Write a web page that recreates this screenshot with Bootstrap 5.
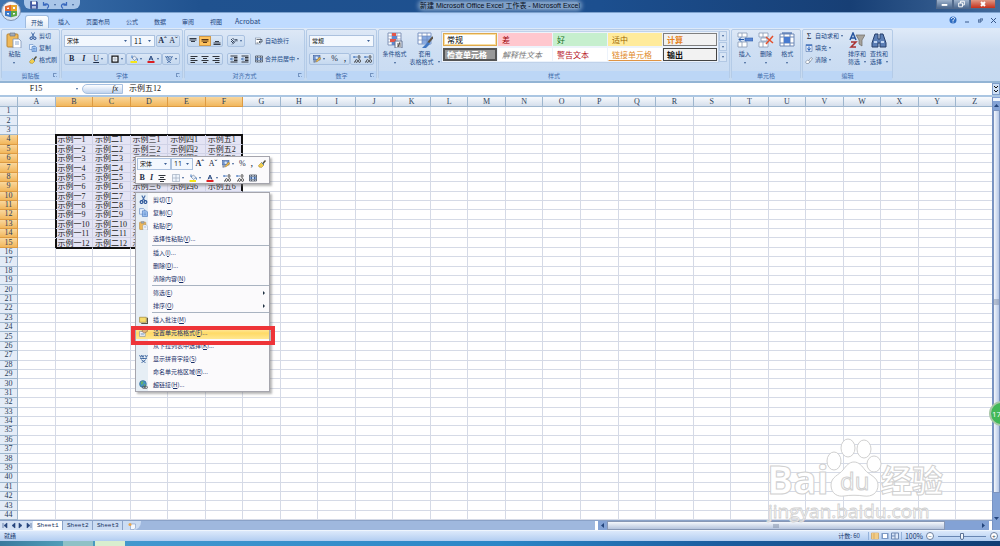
<!DOCTYPE html>
<html lang="zh-CN">
<head>
<meta charset="utf-8">
<meta name="viewport" content="width=device-width, initial-scale=1">
<title>新建 Microsoft Office Excel 工作表 - Microsoft Excel</title>
<link href="https://cdn.jsdelivr.net/npm/bootstrap@5.3.0/dist/css/bootstrap.min.css" rel="stylesheet">
<style>
:root{--ink:#234a86;--edge:#a5bfe0}
body{font:6px/8px "Open Sans","Noto Sans CJK SC",sans-serif;color:var(--ink);background:#bfdbff}
button,select,input{font:inherit;color:inherit;line-height:inherit}
button{border:0;background:none;padding:0;white-space:nowrap}
button:hover{background-color:#ffe9a8}
svg{flex:none;display:block}
.ic{width:8px;height:8px}.ic-big{width:16px;height:16px}
.caret{width:0;height:0;border:1px solid transparent;border-top:2px solid #3b5f95;border-bottom:0;flex:none}
.cn{font-family:"Noto Sans CJK SC",sans-serif}
.glyph{font:8px/10px "Liberation Serif",serif;color:#1c2b45}
.titlebar{height:13px;background:linear-gradient(90deg,#3f74b0 0,#20528f 20%,#1c4f8f 60%,#173f75 85%,#41699a 100%);border-bottom:1px solid #7ea3cf}
.titlebar .cap{font:7px/12px "Liberation Sans","Noto Sans CJK SC",sans-serif;color:#060d1a}
.titlebar .cap span{background:#7f9fc6;box-shadow:0 0 4px 2px #7f9fc6;border-radius:4px}
.qat{height:9px;margin-left:24px;padding:0 6px;border-radius:0 0 6px 6px;background:#a9c6e8}
.winbtn{width:17px;height:9px;border:1px solid #50688a;border-top:0;background:linear-gradient(#9fb3cc,#4d698f)}
.winbtn.close-win{width:26px;background:linear-gradient(#e09a86,#c5301b)}
.orb{position:absolute;left:1px;top:1px;width:20px;height:20px;z-index:3}
.tabs{height:15px;padding-left:25px;background:#bfdbff;color:#24457c}
.tabs a{color:inherit;text-decoration:none;line-height:13px;height:13px;padding:0 7px;margin-right:2px}
.tabs a.on{background:linear-gradient(#fff,#e2ecf8);border:1px solid #9ebbe0;border-bottom:0;border-radius:3px 3px 0 0;padding:0 5px}
.tabs a.wide{padding:0 4px;font-size:7px}
.ribbon{height:55px;padding:1px 1px 2px;background:linear-gradient(#dfeaf8,#cbdcf1 40%,#c6daf1);border-bottom:2px solid #93b4d4;gap:1px}
.group{border:1px solid #b4cbe7;border-radius:2px;background:linear-gradient(#dde8f6,#cfdff3 35%,#c8dbf2);flex:none}
.group .body{height:41px;padding:0 2px 1px}
.group .foot{height:9px;line-height:9px;background:#bcd6f6;color:#3e6aaa;text-align:center;position:relative}
.foot.launch::after{content:"";position:absolute;right:2px;top:2px;width:4px;height:4px;border:1px solid #7393c0;border-right-color:transparent;border-bottom-style:dotted}
.w-clip{width:59px}.w-font{width:122px}.w-align{width:121px}.w-num{width:71px}.w-style{width:352px}.w-cell{width:70px}.w-edit{width:91px}
.big{display:flex;flex-direction:column;align-items:center;width:22px;padding-top:2px}
.big .ic-big{margin-bottom:2px}
.line-btn{display:flex;align-items:center;gap:2px;height:12px}
.set{display:flex;align-items:center;justify-content:space-around;height:12px;border:1px solid #a9c1e0;border-radius:2px;background:linear-gradient(#dbe7f6,#c5d8ef)}
.set button{display:flex;align-items:center;justify-content:center;gap:2px;flex:auto;height:10px}
.set button.on{background:#ffc35e;border:1px solid #cf9a4c}
.w18{width:18px}.w24{width:24px}.w36{width:36px}.w44{width:44px}
select.pick{appearance:none;height:12px;border:1px solid #abc1de;border-radius:0;padding:0 2px;color:#101010;background:#f3f8fe url("data:image/svg+xml,%3Csvg xmlns='http://www.w3.org/2000/svg' width='3' height='2'%3E%3Cpath d='M0 0h3L1.5 2z' fill='%233b5f95'/%3E%3C/svg%3E") no-repeat right 3px center}
select.num{font-size:7px}
.gallery{display:grid;grid-template-columns:repeat(5,54px);grid-template-rows:13px 13px;gap:2px 1px;padding:1px;margin-top:1px;border:1px solid #c0d2ea;background:#edf3fb}
.gallery button{font:8px/10px "Noto Sans CJK SC",sans-serif;text-align:left;padding:0 3px;border:1px solid transparent;overflow:hidden}
.s-norm{background:#fff;color:#000;border-color:#e0a94b!important;box-shadow:inset 0 0 0 1px #f8dfa5}
.s-bad{background:#ffc7ce;color:#9c0006}.s-good{background:#c6efce;color:#167022}.s-mid{background:#ffeb9c;color:#9c6500}
.s-calc{background:#f2f2f2;color:#e5821e;border-color:#7f7f7f!important;font-weight:bold!important}
.s-check{background:#999;color:#fff;border:2px double #555!important;padding:0 2px!important;font-weight:bold!important;line-height:8px!important}
.s-exp{background:#fff;color:#777;font-style:italic!important}.s-warn{background:#fff;color:#b5101c}
.s-link{background:#fff;color:#df8a2c;border-bottom:1px solid #df9443!important}
.s-out{background:#f2f2f2;color:#111;border-color:#444!important;font-weight:bold!important}
.more{width:8px;height:31px;margin-top:1px;gap:1px}.more button{flex:1;background:#d8e5f5;border:1px solid #b2c8e4;display:flex;align-items:center;justify-content:center}
.fbar{height:14px;background:#fff;border-bottom:2px solid #abc6e2;color:#111;font:8px/12px "Liberation Serif","Noto Sans CJK SC",serif}
.fbar input{border:0;padding:0;outline:0;background:none;height:12px}
.fbar .entry{margin-left:6px}
.namebox{width:72px;text-align:center}
.fxpill{width:41px;height:10px;border:1px solid #a5bfe0;border-radius:5px 0 0 5px;background:linear-gradient(#fff,#bfd3ee)}
.expand{width:8px;background:#cfe0f5;border:1px solid #7d9cc8}
.pane{min-height:0;min-width:0;overflow:hidden;background:#fff}
.cells{table-layout:fixed;border-collapse:separate;border-spacing:0;width:calc(100% + 2px);height:calc(100% + 10px);font:8px/8px "Liberation Serif","Noto Sans CJK SC",serif;color:#222}
.cells th,.cells td{padding:0;border-right:1px solid #d5dae6;border-bottom:1px solid #d5dae6;font-weight:normal;line-height:8px;white-space:nowrap}
.cells td{padding:1px 0 0 2px;line-height:7px}
.cells th{text-align:center;background:#e4ecf7;border-color:#9eb6ce;color:#2c3e58}
.cells thead th{height:10px;background:linear-gradient(#f8fafd,#d5dfec)}
.cells th.hot{background:linear-gradient(#f9d79d,#f2b75c);border-color:#dd9b42}
.cells col.rowno{width:18px}
.cells td.sel{background:#e4e4f4;border-color:#d0d2e6}
.cells td.et{box-shadow:0 -1px #111,inset 0 1px #111}.cells td.el{box-shadow:inset 1px 0 #111,-1px 0 #111}.cells td.er{border-right-color:#111;box-shadow:inset -1px 0 #111}.cells td.eb{border-bottom-color:#111;box-shadow:0 1px #111}
.cells td.et.el{box-shadow:-1px -1px #111,inset 1px 1px #111}.cells td.et.er{box-shadow:0 -1px #111,inset -1px 1px #111}.cells td.eb.el{box-shadow:-1px 1px #111,inset 1px 0 #111}
.sheetbar{height:10px;background:#9fb8de;border-top:1px solid #8aa2c8;font:6px/9px "Liberation Mono",monospace}
.sheetbar .nav-arrows{width:33px;background:#d3e1f4}
.sheetbar a{color:#142f60;text-decoration:none;width:30px;padding-left:4px;background:#cbdcf3;border-right:1px solid #8aa2c8}
.sheetbar a.on{background:#fff}
.newtab{width:18px;background:#cbdcf3;border-radius:0 0 8px 0}
.hscroll{width:40%;background:#83a2d5}
.hthumb{flex:1;margin-right:5px;background:linear-gradient(#f4f7fc,#b5c4dd);border:1px solid #8797b5}
.hrest{width:42px}
.vscroll{width:8px;background:#83a2d5;border-left:1px solid #7793c4}
.vthumb{flex:1;margin-bottom:22px;background:linear-gradient(90deg,#f4f7fc,#b5c7e6);border:1px solid #7d94bf}
.status{height:11px;line-height:10px;padding:0 2px 0 4px;background:linear-gradient(#dce9fb,#b2cdf1);border-top:1px solid #eef5fd;color:#15356c}
.status .views{border-left:1px solid #94b2da;border-right:1px solid #94b2da;padding:0 2px;gap:2px}
.status input{appearance:none;width:48px;height:1px;background:#6886b3;margin:0 4px}
.status input::-webkit-slider-thumb{appearance:none;width:4px;height:7px;border:1px solid #5c7397;border-radius:0 0 2px 2px;background:#f2f6fc}
.pct{font-size:7px;margin:0 3px}
.knob{width:8px;height:8px;border:1px solid #6b7f9f;border-radius:50%;background:#fff;line-height:5px;text-align:center;color:#345}
.taskbar{height:5px;background:linear-gradient(90deg,#39799d,#4f9cb8 6%,#4197cf 14%,#2b86c7 50%,#1b5d9f 72%,#103d73 100%)}
.taskbar i{width:30px;height:5px;margin-right:2px;background:#8fc1c6}.taskbar i:first-child{margin-left:63px}.taskbar i.on{background:#d9eecf}
.float{position:absolute;z-index:5;left:135px;width:135px;background:#fbfafc;border:1px solid #a5a5ad;box-shadow:2px 2px 2px #7778}
.minibar{top:156px;height:28px;padding:1px}
.minibar .second{margin:2px 8px 0 0}
.minibar button{display:flex;align-items:center;justify-content:center;gap:2px;height:12px;flex:auto}
.ctx{top:192px;padding:0;margin:0;list-style:none;background:linear-gradient(90deg,#e6eef5 12px,#fbfafc 12px);color:#172d66}
.ctx button{display:flex;align-items:center;width:100%;height:13px;padding-left:3px;gap:5px}
.ctx .ic{width:9px;height:9px}
.ctx hr{margin:0 0 0 16px;border-color:#a9b3c1;opacity:1}
.ctx button.hot{background:linear-gradient(#fff3c6,#ffda67 55%,#ffe790)}
.ctx .arr{margin-left:auto;margin-right:4px;border:2px solid transparent;border-left:2px solid #234;border-right:0}
.frame-red{position:absolute;z-index:6;left:131px;top:326px;width:144px;height:19px;border:4px solid #ee3438;pointer-events:none}
.ball{position:absolute;z-index:6;right:-14px;top:401px;width:25px;height:25px;border-radius:50%;border:2px solid #a9c7a9;background:#42b858;color:#fff;font-size:8px;line-height:21px;padding-left:1px}
.wm{position:absolute;z-index:4;right:52px;bottom:20px;width:182px;height:90px;pointer-events:none}
</style>
</head>
<body class="vh-100 d-flex flex-column overflow-hidden position-relative">
<svg width="0" height="0" class="position-absolute">
<symbol id="cut" viewBox="0 0 16 16"><path d="M5 1l5 9M11 1L6 10" stroke="#456ca8" stroke-width="2" fill="none"/><circle cx="4.500" cy="12.500" r="2.500" fill="none" stroke="#1f4b93" stroke-width="2"/><circle cx="11.500" cy="12.500" r="2.500" fill="none" stroke="#1f4b93" stroke-width="2"/></symbol>
<symbol id="copy" viewBox="0 0 16 16"><path d="M1 1h7l2 2v8H1z" fill="#e8f2ff" stroke="#4b78b8"/><path d="M6 5h7l2 2v8H6z" fill="#a9cbf5" stroke="#2f62ae"/><path d="M8 9h5M8 12h5" stroke="#2f62ae"/></symbol>
<symbol id="paste" viewBox="0 0 16 16"><rect x="1" y="2" width="11" height="13" rx="1" fill="#efb95a" stroke="#b98535"/><path d="M4 1h5v3H4z" fill="#a3acb8" stroke="#66707f" stroke-width=".6"/><path d="M7 7h6l2 2v7H7z" fill="#fff" stroke="#7c93b6" stroke-width=".8"/><path d="M9 10h4M9 12h4" stroke="#8ea9cf"/></symbol>
<symbol id="brush" viewBox="0 0 16 16"><path d="M15 1L9 8" stroke="#54503b" stroke-width="3"/><path d="M7 5l5 5-5 5-5-1-1-3z" fill="#f0cf50" stroke="#a37d21"/><path d="M7 5l5 5" stroke="#4f79b5" stroke-width="2"/></symbol>
<symbol id="lines-l" viewBox="0 0 16 16"><path d="M1 3h14M1 7h9M1 11h14M1 15h9" stroke="#30343c" stroke-width="2"/></symbol>
<symbol id="lines-c" viewBox="0 0 16 16"><path d="M1 3h14M4 7h8M1 11h14M4 15h8" stroke="#30343c" stroke-width="2"/></symbol>
<symbol id="lines-r" viewBox="0 0 16 16"><path d="M1 3h14M6 7h9M1 11h14M6 15h9" stroke="#30343c" stroke-width="2"/></symbol>
<symbol id="v-top" viewBox="0 0 16 16"><path d="M1 3h14M1 6h14M4 9h8" stroke="#333b48" stroke-width="2"/></symbol>
<symbol id="v-mid" viewBox="0 0 16 16"><path d="M1 5h14M1 8h14M4 11h8" stroke="#593719" stroke-width="2"/></symbol>
<symbol id="v-bot" viewBox="0 0 16 16"><path d="M4 9h8M1 12h14M1 15h14" stroke="#333b48" stroke-width="2"/></symbol>
<symbol id="orient" viewBox="0 0 16 16"><path d="M2 4l7 7M5 2l5 5M2 8l5 5" stroke="#38475f" stroke-width="2"/><path d="M4 15L14 5m-4 0h4v4" fill="none" stroke="#38475f" stroke-width="1.500"/></symbol>
<symbol id="indent" viewBox="0 0 16 16"><path d="M1 2h14M8 5h7M8 8h7M8 11h7M1 14h14" stroke="#30343c" stroke-width="2"/><path d="M7 8H1m3-3L1 8l3 3" fill="none" stroke="#285ca7" stroke-width="1.500"/></symbol>
<symbol id="wrap" viewBox="0 0 16 16"><rect x="1" y="2" width="10" height="12" fill="#fff" stroke="#6a7c97"/><path d="M3 5h11v5H8m2-2l-2 2 2 2M3 12h4" stroke="#35414f" stroke-width="1.500" fill="none"/></symbol>
<symbol id="merge" viewBox="0 0 16 16"><path d="M1 2h14v12H1z" fill="#eef3fa" stroke="#3d485a" stroke-width="1.500"/><path d="M5 2v3m6-3v3M5 11v3m6-3v3" stroke="#3d485a" stroke-width="1.500"/><path d="M1 5h14v6H1z" fill="#b8d0ef" stroke="#3d485a"/><path d="M2 8h4m4 0h4M6 8L4 6.500v3zM10 8l2-1.500v3z" stroke="#2a55a0"/></symbol>
<symbol id="money" viewBox="0 0 16 16"><rect x="1" y="1" width="13" height="9" fill="#7295cd" stroke="#2c4f91"/><circle cx="7.500" cy="5.500" r="2.500" fill="#dce8f8"/><path d="M13 4l3 3-7 6-3 1 1-3z" fill="#e7b54a" stroke="#8a6420" stroke-width=".7"/><path d="M1 12h5M1 14h4" stroke="#60718e" stroke-width="2"/></symbol>
<symbol id="dec" viewBox="0 0 16 16"><g fill="none" stroke="#333" stroke-width="1.500"><ellipse cx="12" cy="4" rx="2" ry="3"/><ellipse cx="7" cy="12" rx="2" ry="3"/><ellipse cx="13" cy="12" rx="2" ry="3"/></g><path d="M2 14h2" stroke="#333" stroke-width="2"/><path d="M8 4H1m2-2L1 4l2 2" stroke="#275db0" stroke-width="1.500" fill="none"/></symbol>
<symbol id="border" viewBox="0 0 16 16"><path d="M1 1h14v14H1zM8 1v14M1 8h14" fill="#eef4fc" stroke="#8392ab"/></symbol>
<symbol id="border-b" viewBox="0 0 16 16"><path d="M2 2h12v12H2z" fill="#f2f6fb" stroke="#171717" stroke-width="2.500"/><path d="M8 3v10M3 8h10" stroke="#8b94a3"/></symbol>
<symbol id="fill" viewBox="0 0 16 16"><path d="M4 6l5-4 5 5-5 4z" fill="#e3ebf6" stroke="#44597a"/><path d="M4 6V1M14 7l1 4" stroke="#3470bc" stroke-width="2"/><path d="M1 12h13v4H1z" fill="#f5e619"/></symbol>
<symbol id="color" viewBox="0 0 16 16"><path d="M4 11L8 2l4 9M5 8h6" stroke="#27477e" stroke-width="2" fill="none"/><path d="M1 12h14v4H1z" fill="#dc1e22"/></symbol>
<symbol id="pinyin" viewBox="0 0 16 16"><path d="M1 2l2 4 2-4 2 4 2-4M11 2l2 4 2-4M2 8h12M8 7v2M4 10l8 6M12 10l-8 6" fill="none" stroke="#315b98" stroke-width="1.500"/></symbol>
<symbol id="cond" viewBox="0 0 16 16"><path d="M1 1h13v12H1z" fill="#fff" stroke="#8194b8"/><path d="M1 4h13M1 7h13M1 10h13M5 1v12M10 1v12" stroke="#8194b8" stroke-width=".7"/><path d="M5 1h4v3H5zM3 7h6v3H3z" fill="#e4564a"/><path d="M5 4h5v3H5zM5 10h4v3H5z" fill="#5f88ce"/><path d="M8 9h7v7H8z" fill="#f6f8fb" stroke="#637391"/><path d="M10 12h4M10 14h4M13 10l-2 5" stroke="#222" stroke-width=".7"/></symbol>
<symbol id="tblfmt" viewBox="0 0 16 16"><path d="M1 1h13v11H1z" fill="#fff" stroke="#7c95c3"/><path d="M5 4h9v8H5z" fill="#88aae0"/><path d="M1 4h13M1 8h13M5 1v11M10 1v11" stroke="#6c88ba" stroke-width=".7"/><path d="M16 5l-5 6" stroke="#5d5548" stroke-width="2"/><path d="M11 10l2 2-4 4H5z" fill="#4177c2"/></symbol>
<symbol id="ins" viewBox="0 0 16 16"><path d="M1 1h9v4H1zM1 10h9v5H1zM5 1v4M5 10v5" fill="#fff" stroke="#8797b3" stroke-width=".8"/><path d="M8 6h8v3H8z" fill="#5a86d3" stroke="#2e5aa8" stroke-width=".6"/><path d="M7 7.500H2m2-2l-2 2 2 2" stroke="#2256a8" fill="none"/></symbol>
<symbol id="del" viewBox="0 0 16 16"><path d="M1 1h9v4H1zM3 6h6v3H3zM1 10h9v5H1zM5 1v4M5 10v5" fill="#fff" stroke="#8797b3" stroke-width=".8"/><path d="M8 5l7 6M15 4l-7 8" stroke="#e4502c" stroke-width="1.500"/></symbol>
<symbol id="fmt" viewBox="0 0 16 16"><path d="M1 2h14v12H1zM1 5h14M1 11h14M5 2v12M11 2v12" fill="#fff" stroke="#6d87b5"/><path d="M5 5h6v6H5z" fill="#487bd0"/><path d="M3 1h10" stroke="#2c569f"/></symbol>
<symbol id="down" viewBox="0 0 16 16"><path d="M2 1h12v14H2z" fill="#dfeaf9" stroke="#3a5f9e"/><path d="M2 1h12v3H2z" fill="#4d7cc5"/><path d="M8 5v7M5 9l3 4 3-4" fill="none" stroke="#1c58b4" stroke-width="2"/></symbol>
<symbol id="erase" viewBox="0 0 16 16"><path d="M6 11l6-8 3 2-6 8z" fill="#f8fafc" stroke="#56657b"/><path d="M1 12l4-4 5 3-3 4H3z" fill="#fff" stroke="#56657b"/></symbol>
<symbol id="sort" viewBox="0 0 16 16"><path d="M1 8l3-7 3 7M2 6h4" stroke="#28559e" stroke-width="1.500" fill="none"/><path d="M2 10h5l-5 5h5" stroke="#a93131" stroke-width="1.500" fill="none"/><path d="M7 3h9l-3 5v6l-3-2V8z" fill="#a6a29b" stroke="#6e6a64" stroke-width=".7"/></symbol>
<symbol id="find" viewBox="0 0 16 16"><path d="M4 2h3v5h2V2h3l3 9v4H9v-4H7v4H1v-4z" fill="#5b7eb5" stroke="#263e6b"/><path d="M3 10h3M10 10h3" stroke="#c3d7f2" stroke-width="2"/></symbol>
<symbol id="note" viewBox="0 0 16 16"><path d="M1 4h12v9H1z" fill="#f7dc6a" stroke="#8a7120"/><path d="M15 5v10H4" stroke="#5b5742" stroke-width="2" fill="none"/></symbol>
<symbol id="newsheet" viewBox="0 0 16 16"><path d="M5 4h10v8l-3 3H5z" fill="#f4f8fe" stroke="#6b86b5"/><circle cx="4" cy="5" r="3" fill="#eaa54b"/></symbol>
<symbol id="prop" viewBox="0 0 16 16"><path d="M1 6h10v9H1z" fill="#f8f8f8" stroke="#717e94"/><path d="M3 10h6M3 12h6" stroke="#6687b7"/><path d="M5 6l3-5h7v5l-5 3z" fill="#e1b073" stroke="#846139"/></symbol>
<symbol id="globe" viewBox="0 0 16 16"><circle cx="7" cy="7" r="6" fill="#4493c2" stroke="#285e91"/><path d="M3 3l5-1-1 4-3 3zM8 7l4 1-2 4z" fill="#66b26a"/><rect x="6" y="11" width="5" height="4" rx="2" fill="none" stroke="#555" stroke-width="1.500"/><rect x="10" y="11" width="5" height="4" rx="2" fill="none" stroke="#555" stroke-width="1.500"/></symbol>
<symbol id="save" viewBox="0 0 16 16"><path d="M1 1h13l1 2v12H1z" fill="#4159a6" stroke="#263775"/><path d="M4 1h8v6H4z" fill="#fff"/><path d="M4 10h8v5H4z" fill="#b3c0df"/></symbol>
<symbol id="undo" viewBox="0 0 16 16"><path d="M10 15c7-6 1-12-7-7m0-6v6h6" stroke="#3868bd" stroke-width="2.500" fill="none"/></symbol>
<symbol id="redo" viewBox="0 0 16 16"><path d="M6 15c-7-6-1-12 7-7m0-6v6H7" stroke="#3868bd" stroke-width="2.500" fill="none"/></symbol>
</svg>

<header class="titlebar d-flex position-relative">
  <div class="qat d-flex align-items-center gap-1">
    <button aria-label="保存"><svg class="ic"><use href="#save"/></svg></button>
    <button aria-label="撤消" class="d-flex align-items-center gap-1"><svg class="ic"><use href="#undo"/></svg><span class="caret"></span></button>
    <button aria-label="恢复" class="d-flex align-items-center gap-1"><svg class="ic"><use href="#redo"/></svg><span class="caret"></span></button>
  </div>
  <div class="cap position-absolute start-0 end-0 text-center"><span>新建 Microsoft Office Excel 工作表 - Microsoft Excel</span></div>
  <div class="ms-auto me-1 d-flex position-relative">
    <button class="winbtn" aria-label="最小化"><svg class="w-100 h-100" viewBox="0 0 16 8"><path d="M5 5h6" stroke="#fff" stroke-width="2"/></svg></button>
    <button class="winbtn" aria-label="还原"><svg class="w-100 h-100" viewBox="0 0 16 8"><path d="M5 3h4v4H5zM7 3V1h4v4H9" fill="none" stroke="#fff"/></svg></button>
    <button class="winbtn close-win" aria-label="关闭"><svg class="w-100 h-100" viewBox="0 0 24 8"><path d="M10 2l4 4M14 2l-4 4" stroke="#fff" stroke-width="2"/></svg></button>
  </div>
</header>
<button class="orb" aria-label="Office 按钮"><svg viewBox="0 0 20 20"><circle cx="10" cy="10" r="9.500" fill="#dbe3ee" stroke="#7e92b0"/><circle cx="10" cy="8" r="7" fill="#f6f8fb"/><g fill="none" stroke-width="2"><path d="M5 6l4-1v4H5z" stroke="#e2682e"/><path d="M11 5h4v4h-4z" stroke="#e9a52d"/><path d="M5 11h4v4l-4-1z" stroke="#3b79c8"/><path d="M11 11h4v3l-4 1z" stroke="#5ba747"/></g></svg></button>

<nav class="tabs d-flex align-items-end cn">
  <a href="#" class="on">开始</a><a href="#">插入</a><a href="#">页面布局</a><a href="#">公式</a><a href="#">数据</a><a href="#">审阅</a><a href="#">视图</a><a href="#" class="wide">Acrobat</a>
  <div class="ms-auto d-flex align-items-center gap-2 me-1 mb-1">
    <button aria-label="帮助"><svg class="ic" viewBox="0 0 16 16"><circle cx="8" cy="8" r="7" fill="#2f6cc0"/><path d="M5 6c0-4 6-4 6-1 0 2-3 2-3 5m0 1v2" stroke="#fff" stroke-width="2" fill="none"/></svg></button>
    <button aria-label="最小化工作簿"><svg width="5" height="5"><path d="M0 4h4" stroke="#39588a"/></svg></button>
    <button aria-label="还原工作簿"><svg width="5" height="5"><path d="M0 2h3v2H0zM2 1h3v2" stroke="#39588a" fill="none"/></svg></button>
    <button aria-label="关闭工作簿"><svg width="5" height="5"><path d="M0 0l5 5M5 0L0 5" stroke="#39588a"/></svg></button>
  </div>
</nav>

<section class="ribbon d-flex cn">
  <div class="group w-clip"><div class="body d-flex gap-1">
    <button class="big"><svg class="ic-big"><use href="#paste"/></svg>粘贴<span class="caret mt-1"></span></button>
    <div><button class="line-btn"><svg class="ic"><use href="#cut"/></svg>剪切</button><button class="line-btn"><svg class="ic"><use href="#copy"/></svg>复制</button><button class="line-btn"><svg class="ic"><use href="#brush"/></svg>格式刷</button></div>
  </div><div class="foot launch">剪贴板</div></div>

  <div class="group w-font"><div class="body d-flex flex-column justify-content-evenly">
    <div class="d-flex"><select class="pick" style="width:67px" aria-label="字体"><option>宋体</option></select><select class="pick num" style="width:24px" aria-label="字号"><option>11</option></select><div class="set w24 ms-auto"><button class="glyph"><b>Aˆ</b></button><button class="glyph">Aˇ</button></div></div>
    <div class="d-flex justify-content-between"><div class="set w44"><button class="glyph"><b>B</b></button><button class="glyph"><b><i>I</i></b></button><button class="glyph"><u>U</u><span class="caret"></span></button></div>
    <div class="set w18"><button aria-label="边框"><svg class="ic"><use href="#border-b"/></svg><span class="caret"></span></button></div>
    <div class="set w36"><button aria-label="填充颜色"><svg class="ic"><use href="#fill"/></svg><span class="caret"></span></button><button aria-label="字体颜色"><svg class="ic"><use href="#color"/></svg><span class="caret"></span></button></div>
    <div class="set w18"><button aria-label="拼音"><svg class="ic"><use href="#pinyin"/></svg><span class="caret"></span></button></div></div>
  </div><div class="foot launch">字体</div></div>

  <div class="group w-align"><div class="body d-flex gap-1">
    <div class="d-flex flex-column justify-content-evenly">
      <div class="d-flex gap-1"><div class="set w36"><button aria-label="顶端对齐"><svg class="ic"><use href="#v-top"/></svg></button><button class="on" aria-label="垂直居中"><svg class="ic"><use href="#v-mid"/></svg></button><button aria-label="底端对齐"><svg class="ic"><use href="#v-bot"/></svg></button></div><div class="set w18"><button aria-label="方向"><svg class="ic"><use href="#orient"/></svg><span class="caret"></span></button></div></div>
      <div class="d-flex gap-1"><div class="set w36"><button aria-label="左对齐"><svg class="ic"><use href="#lines-l"/></svg></button><button aria-label="居中"><svg class="ic"><use href="#lines-c"/></svg></button><button aria-label="右对齐"><svg class="ic"><use href="#lines-r"/></svg></button></div><div class="set w24"><button aria-label="减少缩进"><svg class="ic"><use href="#indent"/></svg></button><button aria-label="增加缩进"><svg class="ic"><use href="#indent"/></svg></button></div></div>
    </div>
    <div class="d-flex flex-column justify-content-evenly"><button class="line-btn"><svg class="ic"><use href="#wrap"/></svg>自动换行</button><button class="line-btn"><svg class="ic"><use href="#merge"/></svg>合并后居中<span class="caret"></span></button></div>
  </div><div class="foot launch">对齐方式</div></div>

  <div class="group w-num"><div class="body d-flex flex-column justify-content-evenly">
    <select class="pick w-100" aria-label="数字格式"><option>常规</option></select>
    <div class="d-flex justify-content-between"><div class="set" style="width:41px"><button aria-label="会计数字格式"><svg class="ic"><use href="#money"/></svg><span class="caret"></span></button><button class="glyph">%</button><button class="glyph"><b>,</b></button></div><div class="set w24"><button aria-label="增加小数位数"><svg class="ic"><use href="#dec"/></svg></button><button aria-label="减少小数位数"><svg class="ic"><use href="#dec"/></svg></button></div></div>
  </div><div class="foot launch">数字</div></div>

  <div class="group w-style"><div class="body d-flex">
    <button class="big" style="width:27px"><svg class="ic-big"><use href="#cond"/></svg>条件格式<span class="caret mt-1"></span></button>
    <button class="big" style="width:33px"><svg class="ic-big"><use href="#tblfmt"/></svg>套用<span class="d-flex align-items-center gap-1">表格格式<span class="caret"></span></span></button>
    <div class="gallery align-self-start"><button class="s-norm">常规</button><button class="s-bad">差</button><button class="s-good">好</button><button class="s-mid">适中</button><button class="s-calc">计算</button><button class="s-check">检查单元格</button><button class="s-exp">解释性文本</button><button class="s-warn">警告文本</button><button class="s-link">链接单元格</button><button class="s-out">输出</button></div>
    <div class="more d-flex flex-column"><button aria-label="上一行"><span class="caret"></span></button><button aria-label="下一行"><span class="caret"></span></button><button aria-label="其他样式"><span class="caret"></span></button></div>
  </div><div class="foot">样式</div></div>

  <div class="group w-cell"><div class="body d-flex"><button class="big"><svg class="ic-big"><use href="#ins"/></svg>插入<span class="caret mt-1"></span></button><button class="big"><svg class="ic-big"><use href="#del"/></svg>删除<span class="caret mt-1"></span></button><button class="big"><svg class="ic-big"><use href="#fmt"/></svg>格式<span class="caret mt-1"></span></button></div><div class="foot">单元格</div></div>

  <div class="group w-edit"><div class="body d-flex justify-content-between"><div><button class="line-btn"><b class="glyph ic">Σ</b>自动求和<span class="caret"></span></button><button class="line-btn"><svg class="ic"><use href="#down"/></svg>填充<span class="caret"></span></button><button class="line-btn"><svg class="ic"><use href="#erase"/></svg>清除<span class="caret"></span></button></div>
    <div class="d-flex"><button class="big"><svg class="ic-big"><use href="#sort"/></svg>排序和<span class="d-flex align-items-center gap-1">筛选<span class="caret"></span></span></button><button class="big"><svg class="ic-big"><use href="#find"/></svg>查找和<span class="d-flex align-items-center gap-1">选择<span class="caret"></span></span></button></div></div><div class="foot">编辑</div></div>
</section>

<div class="fbar d-flex align-items-center">
  <input class="namebox" value="F15" aria-label="名称框"><span class="caret mx-1"></span>
  <div class="fxpill pe-1 d-flex align-items-center justify-content-end"><i>fx</i></div>
  <input class="flex-fill entry" value="示例五12" aria-label="编辑栏">
  <button class="expand align-self-stretch" aria-label="展开编辑栏"><svg width="6" height="10"><path d="M1 2l2 2 2-2M1 6l2 2 2-2" stroke="#111" fill="none"/></svg></button>
</div>

<main class="d-flex flex-fill" style="min-height:0">
  <div class="pane d-flex flex-column flex-fill">
    <div class="pane flex-fill"><table class="cells"><colgroup><col class="rowno"></colgroup><thead><tr id="heads"></tr></thead><tbody id="rows"></tbody></table></div>
    <div class="sheetbar d-flex flex-shrink-0 position-relative">
      <div class="nav-arrows"><svg width="33" height="8"><path d="M3 2v5M7 2L4 4.500 7 7zM15 2l-3 2.500L15 7zM19 2l3 2.500L19 7zM27 2l3 2.500L27 7zM31 2v5" fill="#27457c" stroke="#27457c" stroke-width=".6"/></svg></div>
      <a href="#" class="on">Sheet1</a><a href="#">Sheet2</a><a href="#">Sheet3</a><button class="newtab" aria-label="插入工作表"><svg class="ic mx-auto"><use href="#newsheet"/></svg></button>
      <div class="hscroll d-flex ms-auto"><svg width="12" height="9"><path d="M0 0h3v9H0z" fill="#fff"/><path d="M9 2L6 4.500 9 7z" fill="#24457c"/></svg><div class="hthumb d-flex justify-content-center"><svg width="6" height="7"><path d="M1 2v4M3 2v4M5 2v4" stroke="#8390a8"/></svg></div><div class="hrest"><svg width="42" height="9"><path d="M32 2l3 2.500L32 7z" fill="#24457c"/><path d="M39 0h3v9h-3z" fill="#fff"/></svg></div></div>
    </div>
  </div>
  <div class="vscroll d-flex flex-column"><svg width="7" height="13"><path d="M0 1h7v3H0z" fill="#eef4fc"/><path d="M1 10l2.500-3L6 10z" fill="#24457c"/></svg><div class="vthumb d-flex align-items-center"><svg width="5" height="6"><path d="M0 1h5M0 3h5M0 5h5" stroke="#8390a8"/></svg></div><svg width="7" height="15"><path d="M1 2l2.500 3L6 2z" fill="#24457c"/></svg></div>
</main>

<footer class="status d-flex align-items-center cn"><span>就绪</span><span class="ms-auto me-1">计数: 60</span>
  <div class="views d-flex ms-1"><svg class="ic" viewBox="0 0 16 16"><path d="M1 2h14v12H1zM1 6h14M1 10h14M6 2v12" fill="#ffe2a1" stroke="#c58b35"/></svg><svg class="ic" viewBox="0 0 16 16"><path d="M1 2h14v12H1z" fill="#7d99c4"/><path d="M4 4h8v8H4z" fill="#fff"/></svg><svg class="ic" viewBox="0 0 16 16"><path d="M1 2h14v12H1zM1 8h7V2M8 8v6" fill="#dfe9f8" stroke="#6e89b3" stroke-width="2"/></svg></div>
  <span class="pct">100%</span><button class="knob" aria-label="缩小">−</button><input type="range" aria-label="显示比例" value="50"><button class="knob" aria-label="放大">+</button>
</footer>
<div class="taskbar d-flex flex-shrink-0"><i></i><i class="on"></i></div>

<svg class="wm" viewBox="0 0 182 90" fill="#fff" stroke="#d0d0d0">
  <g transform="translate(0 -10)"><ellipse cx="68" cy="35" rx="7" ry="9"/><ellipse cx="82" cy="22" rx="7" ry="9"/><ellipse cx="98" cy="23" rx="7" ry="9"/><ellipse cx="108" cy="38" rx="7" ry="8"/><path d="M88 36c-5 0-8 4-11 8-4 5-12 7-12 15 0 9 7 12 13 11 6-1 14-1 20 0 8 1 14-3 14-11 0-8-9-10-13-15-3-4-6-8-11-8z"/></g>
  <g font-family="Open Sans,sans-serif"><text x="1" y="58" font-size="39" font-weight="bold">Bai</text><text x="74" y="54" font-size="24">du</text><text x="2" y="82" font-size="19" stroke-width=".8">jingyan.baidu.com</text></g>
  <text x="115" y="56" font-size="31" font-weight="bold" font-family="Noto Sans CJK SC,sans-serif">经验</text>
</svg>

<div class="float minibar">
  <div class="d-flex"><select class="pick" style="width:34px" aria-label="浮动字体"><option>宋体</option></select><select class="pick num" style="width:22px" aria-label="浮动字号"><option>11</option></select><button class="glyph"><b>Aˆ</b></button><button class="glyph">Aˇ</button><button aria-label="会计格式"><svg class="ic"><use href="#money"/></svg><span class="caret"></span></button><button class="glyph">%</button><button class="glyph"><b>,</b></button><button aria-label="格式刷"><svg class="ic"><use href="#brush"/></svg></button></div>
  <div class="d-flex second"><button class="glyph"><b>B</b></button><button class="glyph"><b><i>I</i></b></button><button aria-label="居中"><svg class="ic"><use href="#lines-c"/></svg></button><button aria-label="边框"><svg class="ic"><use href="#border"/></svg><span class="caret"></span></button><button aria-label="填充"><svg class="ic"><use href="#fill"/></svg><span class="caret"></span></button><button aria-label="颜色"><svg class="ic"><use href="#color"/></svg><span class="caret"></span></button><button aria-label="增加小数"><svg class="ic"><use href="#dec"/></svg></button><button aria-label="减少小数"><svg class="ic"><use href="#dec"/></svg></button><button aria-label="合并"><svg class="ic"><use href="#merge"/></svg></button></div>
</div>
<ul class="float ctx cn">
  <li><button><svg class="ic"><use href="#cut"/></svg><span>剪切(<u>T</u>)</span></button></li>
  <li><button><svg class="ic"><use href="#copy"/></svg><span>复制(<u>C</u>)</span></button></li>
  <li><button><svg class="ic"><use href="#paste"/></svg><span>粘贴(<u>P</u>)</span></button></li>
  <li><button><svg class="ic"></svg><span>选择性粘贴(<u>V</u>)...</span></button><hr></li>
  <li><button><svg class="ic"></svg><span>插入(<u>I</u>)...</span></button></li>
  <li><button><svg class="ic"></svg><span>删除(<u>D</u>)...</span></button></li>
  <li><button><svg class="ic"></svg><span>清除内容(<u>N</u>)</span></button><hr></li>
  <li><button><svg class="ic"></svg><span>筛选(<u>E</u>)</span><span class="arr"></span></button></li>
  <li><button><svg class="ic"></svg><span>排序(<u>O</u>)</span><span class="arr"></span></button><hr></li>
  <li><button><svg class="ic"><use href="#note"/></svg><span>插入批注(<u>M</u>)</span></button></li>
  <li><button class="hot"><svg class="ic"><use href="#prop"/></svg><span>设置单元格格式(<u>F</u>)...</span></button></li>
  <li><button><svg class="ic"></svg><span>从下拉列表中选择(<u>K</u>)...</span></button></li>
  <li><button><svg class="ic"><use href="#pinyin"/></svg><span>显示拼音字段(<u>S</u>)</span></button></li>
  <li><button><svg class="ic"></svg><span>命名单元格区域(<u>R</u>)...</span></button></li>
  <li><button><svg class="ic"><use href="#globe"/></svg><span>超链接(<u>H</u>)...</span></button></li>
</ul>
<div class="frame-red"></div>
<div class="ball">17</div>

<script>
const letters = [...'ABCDEFGHIJKLMNOPQRSTUVWXYZ'];
const names = {B:'一', C:'二', D:'三', E:'四', F:'五'};
document.getElementById('heads').innerHTML = '<th></th>' + letters.map(c => `<th class="${names[c] ? 'hot' : ''}">${c}</th>`).join('');
let html = '';
for (let r = 1; r <= 45; r++) {
  const inside = r >= 4 && r <= 15;
  html += `<tr><th class="${inside ? 'hot' : ''}">${r}</th>`;
  for (const c of letters) {
    if (inside && names[c]) {
      const edge = ['sel', r === 4 && 'et', r === 15 && 'eb', c === 'B' && 'el', c === 'F' && 'er'].filter(Boolean).join(' ');
      html += `<td class="${edge}">示例${names[c]}${r - 3}</td>`;
    } else html += '<td></td>';
  }
  html += '</tr>';
}
document.getElementById('rows').innerHTML = html;
</script>
<script src="https://cdn.jsdelivr.net/npm/bootstrap@5.3.0/dist/js/bootstrap.bundle.min.js"></script>
</body>
</html>
